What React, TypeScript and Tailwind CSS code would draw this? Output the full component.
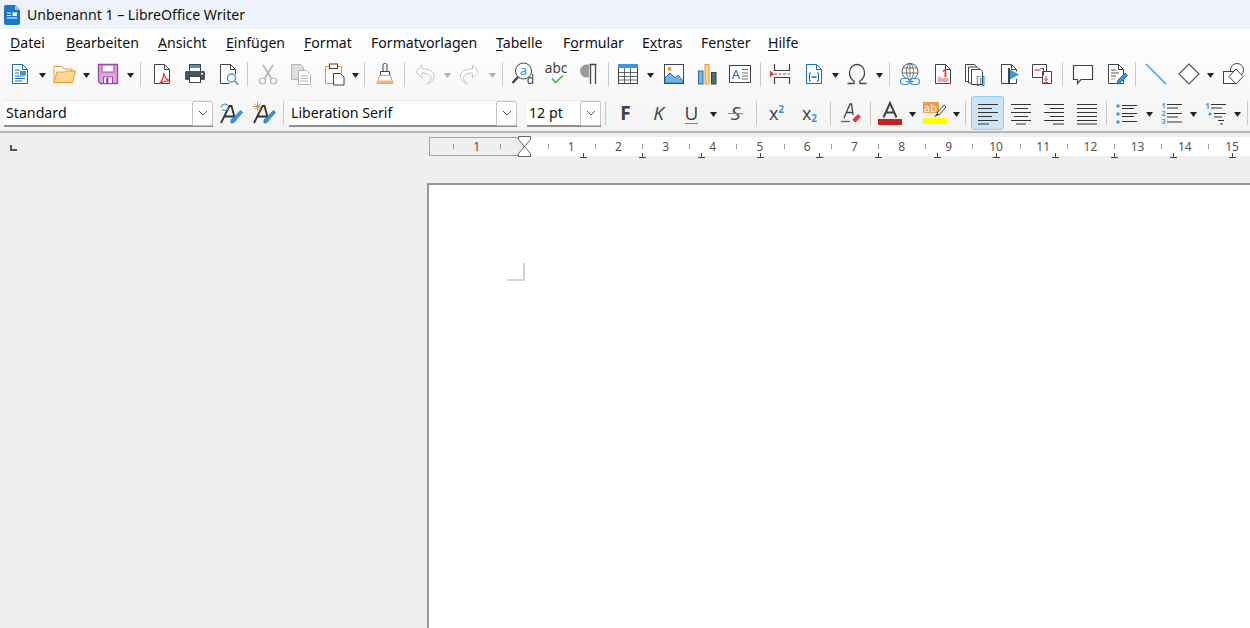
import type { ReactNode } from "react";

const DARK = "#3f4448";
const BLUE = "#1e6fb5";
const SKY = "#3a96dd";
const ORANGE = "#f0943a";
const GRAY = "#b4b4b4";

const Svg = ({ children }: { children: ReactNode }) => (
  <svg className="overflow-visible" width="24" height="24" viewBox="0 0 24 24" fill="none" strokeWidth="1">
    {children}
  </svg>
);

const Doc = ({ color = DARK }: { color?: string }) => (
  <path d="M4.500 2.500h10l5 5v14h-15zM14.500 2.500v5h5" stroke={color} fill="#fff" />
);

const Btn = ({ children, active }: { children: ReactNode; active?: boolean }) => (
  <div
    className={
      active
        ? "w-[33px] h-[34px] shrink-0 flex items-center justify-center rounded-[3px] bg-[#cde4f7] border border-[#90c8f6]"
        : "w-[33px] h-[34px] shrink-0 flex items-center justify-center"
    }
  >
    {children}
  </div>
);

const Arrow = ({ w, faded }: { w: string; faded?: boolean }) => (
  <div className={`${w} shrink-0 flex items-center justify-center pt-[3px]`}>
    <svg width="7" height="5" viewBox="0 0 7 5">
      <path d="M0 0h7L3.500 5z" fill={faded ? "#b0b0b0" : "#222"} />
    </svg>
  </div>
);

const Sep = ({ w }: { w: string }) => (
  <div className={`${w} shrink-0 flex items-center justify-center`}>
    <div className="w-px h-[24px] bg-[#c9c9c9]" />
  </div>
);

const Combo = ({ text, w }: { text: string; w: string }) => (
  <div className={`${w} h-[27px] shrink-0 flex items-center bg-white border-b-2 border-[#8f8f8f] border-t border-t-[#ececec] pl-[2px] text-[14.2px] text-[#111]`}>
    <span className="flex-1 truncate">{text}</span>
    <div className="w-[21px] h-[25px] mb-[-1px] flex items-center justify-center bg-white border border-[#c4c4c4] rounded-[2px]">
      <svg width="10" height="6" viewBox="0 0 10 6" fill="none">
        <path d="M1 1l4 4 4-4" stroke="#555" />
      </svg>
    </div>
  </div>
);

const NewDoc = () => (
  <Svg>
    <Doc color={BLUE} />
    <path d="M7 8h5M7 11h4M7 14h10M7 16.500h10M7 19h7" stroke={BLUE} />
    <rect x="12" y="9" width="6" height="4" fill={SKY} />
  </Svg>
);

const Open = () => (
  <Svg>
    <path d="M1 20.500v-16h8l2 2.500h8v3" stroke={ORANGE} fill="#fff" />
    <path d="M1 20.500l3-10.500h8l1.500-1h9l-3 11.500z" stroke={ORANGE} fill="#fbd88c" />
  </Svg>
);

const Save = () => (
  <Svg>
    <path d="M2.500 2.500h19v19h-17l-2-2z" stroke="#a347a8" fill="#d9a5dc" strokeWidth="1.400" />
    <rect x="6" y="3" width="12" height="7" fill="#fff" stroke="#a347a8" />
    <rect x="7.500" y="15" width="9" height="6.500" fill="#fff" stroke="#a347a8" />
    <rect x="10" y="16" width="2.500" height="5" fill="#a347a8" />
  </Svg>
);

const Pdf = () => (
  <Svg>
    <Doc />
    <path d="M9 22c3-3 5-7 4.500-11 1 4 3 7 7 8-4-.5-8 .5-11.500 3z" stroke="#e23c3c" strokeWidth="1.200" fill="#fff" />
  </Svg>
);

const Print = () => (
  <Svg>
    <rect x="6.500" y="2.500" width="11" height="8" fill="#fff" stroke={DARK} />
    <rect x="7" y="3" width="10" height="3" fill={SKY} />
    <rect x="2" y="9" width="20" height="9" rx="1.500" fill="#4b5358" />
    <rect x="6.500" y="14.500" width="11" height="6" fill="#fff" stroke={DARK} />
    <rect x="18" y="11" width="2" height="1.500" fill="#fff" />
  </Svg>
);

const Preview = () => (
  <Svg>
    <path d="M4.500 21.500v-19h10l5 5v5M4.500 21.500h9M14.500 2.500v5h5" stroke={DARK} fill="#fff" />
    <circle cx="15.500" cy="16" r="4" stroke={SKY} strokeWidth="1.300" fill="#fff" />
    <path d="M18.500 19l3.500 3.500" stroke={SKY} strokeWidth="1.600" />
  </Svg>
);

const Cut = () => (
  <Svg>
    <path d="M7 3l8.500 14M17 3L8.500 17" stroke={GRAY} strokeWidth="1.500" />
    <circle cx="6.500" cy="19" r="3" stroke={GRAY} strokeWidth="1.200" />
    <circle cx="17.500" cy="19" r="3" stroke={GRAY} strokeWidth="1.200" />
  </Svg>
);

const Copy = () => (
  <Svg>
    <path d="M2.500 2.500h9l3 3v12h-12z" stroke={GRAY} fill="#ddd" />
    <path d="M9.500 8.500h8l4 4v10h-12z" stroke={GRAY} fill="#fff" />
    <path d="M11.500 14h8M11.500 16.500h8M11.500 19h8" stroke={GRAY} />
  </Svg>
);

const Paste = () => (
  <Svg>
    <path d="M3.500 4.500h16v17h-16z" stroke={ORANGE} fill="#fff" />
    <rect x="7.500" y="2" width="8" height="4.500" fill="#fff" stroke={DARK} />
    <path d="M11.500 11.500h7l3.500 3.500v8h-10.500z" stroke={DARK} fill="#fff" />
  </Svg>
);

const Clone = () => (
  <Svg>
    <rect x="10" y="1.500" width="4" height="8" rx="1.500" stroke={DARK} fill="#fff" />
    <path d="M7.500 13.500v-4h9v4" stroke={DARK} fill="#fff" />
    <path d="M6.500 13.500h11l2.500 8h-16z" stroke={ORANGE} fill="#fff" />
    <path d="M4.500 18.500h15l.5 3h-16z" fill="#f5b878" />
  </Svg>
);

const Undo = () => (
  <Svg>
    <path d="M3 10l6-7v4c7 0 12 2 12 7 0 4-3 7-7 8 3-2 4-4 4-6 0-3-3-5-9-5v5z" stroke="#c4c4c4" fill="#fff" />
  </Svg>
);

const Redo = () => (
  <Svg>
    <path d="M19.500 10l-6-7v4c-7 0-12 2-12 7 0 4 3 7 7 8-3-2-4-4-4-6 0-3 3-5 9-5v5z" stroke="#c4c4c4" fill="#fff" />
  </Svg>
);

const Find = () => (
  <Svg>
    <circle cx="12.500" cy="9" r="8" stroke={DARK} fill="#fff" />
    <path d="M7 15l-5.500 6" stroke={DARK} strokeWidth="2.400" />
    <text x="12.500" y="13" textAnchor="middle" fontSize="13" fill={SKY} fontFamily="Noto Sans">a</text>
    <text x="19.500" y="21.500" textAnchor="middle" fontSize="12" fill={DARK} fontFamily="Noto Sans">d</text>
  </Svg>
);

const Spell = () => (
  <Svg>
    <text x="12" y="11" textAnchor="middle" fontSize="13.500" fill={DARK} fontFamily="Noto Sans">abc</text>
    <path d="M8 16.500l3.500 4L19 13.500" stroke="#3fb45a" strokeWidth="1.600" />
  </Svg>
);

const Pilcrow = () => (
  <Svg>
    <path d="M12 2.500h-2.500a6.500 6.500 0 0 0 0 13H12z" fill="#9a9a9a" />
    <path d="M12.500 2.500h7M13.500 2.500v19.500M18.500 2.500v19.500" stroke={DARK} strokeWidth="1.300" />
  </Svg>
);

const Table = () => (
  <Svg>
    <rect x="2.500" y="2.500" width="19" height="19" fill="#fff" stroke={DARK} />
    <rect x="2" y="2" width="20" height="4" fill={SKY} />
    <path d="M2.500 10.500h19M2.500 14.500h19M2.500 18h19M8.500 6v15M14.500 6v15" stroke={DARK} strokeWidth=".8" />
  </Svg>
);

const ImageIcon = () => (
  <Svg>
    <rect x="2.500" y="2.500" width="19" height="19" fill="#fff" stroke={DARK} />
    <circle cx="7.500" cy="7" r="2" fill={ORANGE} />
    <path d="M3 21v-5l5-5 5 5 3-3 5 6v2z" fill="#6fb6e6" stroke={BLUE} />
  </Svg>
);

const Chart = () => (
  <Svg>
    <rect x="3.500" y="9" width="4.500" height="13" fill="#6fb6e6" stroke={BLUE} />
    <rect x="10" y="2.500" width="4" height="19.500" fill="#fbd88c" stroke={ORANGE} />
    <rect x="16.500" y="10.500" width="4.500" height="11.500" fill="#5f666b" stroke={DARK} />
  </Svg>
);

const TextBox = () => (
  <Svg>
    <rect x="1.500" y="3.500" width="21" height="17" fill="#fff" stroke={DARK} />
    <text x="8" y="16.500" textAnchor="middle" fontSize="13" fill={BLUE} fontFamily="Noto Sans">A</text>
    <path d="M14 7.500h6M14 11h6M14 14h6M14 17h6" stroke={DARK} strokeWidth=".8" />
  </Svg>
);

const PageBreak = () => (
  <Svg>
    <path d="M5.500 2v6.500h15V2M5.500 22v-6.500h15V22" stroke={DARK} strokeWidth="1.200" />
    <path d="M5 12h16" stroke="#e23c3c" strokeDasharray="3 1.500" />
    <path d="M1 8.500l4 3.500-4 3.500z" fill="#e23c3c" />
  </Svg>
);

const Field = () => (
  <Svg>
    <Doc color={BLUE} />
    <path d="M9 11H7.500v8H9M15 11h1.500v8H15" stroke={BLUE} />
    <path d="M9.500 15h5" stroke={BLUE} strokeWidth="1.500" />
  </Svg>
);

const Omega = () => (
  <Svg>
    <path d="M2.500 21.500h6.500v-2.500c-3-2-4.500-4.500-4.500-8 0-5 3-8.500 7.500-8.500s7.500 3.500 7.500 8.500c0 3.500-1.500 6-4.500 8v2.500h6.500" stroke={DARK} strokeWidth="1.300" />
  </Svg>
);

const Hyperlink = () => (
  <Svg>
    <circle cx="12" cy="9.500" r="8" stroke="#555" fill="#fff" />
    <ellipse cx="12" cy="9.500" rx="3.500" ry="8" stroke="#555" strokeWidth=".8" />
    <path d="M12 1.500v14M5 6h14M5 11h14" stroke="#555" strokeWidth=".8" />
    <rect x="2.500" y="16.500" width="9" height="6" rx="3" fill="#fff" stroke={SKY} strokeWidth="1.200" />
    <rect x="12.500" y="16.500" width="9" height="6" rx="3" fill="#fff" stroke={SKY} strokeWidth="1.200" />
    <path d="M8 19.500h8" stroke={SKY} strokeWidth="1.200" />
  </Svg>
);

const Footnote = () => (
  <Svg>
    <Doc />
    <text x="14" y="15" textAnchor="middle" fontSize="11" fontWeight="700" fill="#e23c3c" fontFamily="Noto Sans">1</text>
    <path d="M6.500 17h11M6.500 19h11" stroke="#e23c3c" strokeWidth=".9" />
    <path d="M6.500 15h4" stroke={GRAY} />
  </Svg>
);

const Endnote = () => (
  <Svg>
    <path d="M1.500 2.500h9l2 2v15h-11z" stroke={DARK} fill="#fff" />
    <path d="M4.500 5h9l2 2v14h-11z" stroke={DARK} fill="#fff" />
    <path d="M7.500 7.500h9l2 2v13h-11z" stroke={DARK} fill="#fff" />
    <text x="16.500" y="22" textAnchor="middle" fontSize="10" fill={BLUE} fontFamily="Noto Sans">[i]</text>
  </Svg>
);

const Bookmark = () => (
  <Svg>
    <path d="M4.500 21.500v-19h10l5 5v2M14.500 2.500v5h5M19.500 17v4.500h-15" stroke={DARK} />
    <rect x="11" y="6" width="2" height="16" fill={DARK} />
    <path d="M13 7.500l9 5-9 5z" fill={SKY} />
  </Svg>
);

const CrossRef = () => (
  <Svg>
    <path d="M2.500 2.500h14v13h-14z" stroke={DARK} fill="#fff" />
    <path d="M4.500 8h6" stroke="#e23c3c" strokeWidth="1.200" />
    <path d="M12.500 9.500h9v12h-9z" stroke={DARK} fill="#fff" />
    <path d="M10.500 6.500h3v7" stroke={DARK} />
    <path d="M16 14v4M14 16.500l2 2.500 2-2.500M14 20.500h4" stroke="#e23c3c" />
  </Svg>
);

const Comment = () => (
  <Svg>
    <path d="M2.500 3.500h19v14H10l-3.500 4v-4h-4z" stroke={DARK} strokeWidth="1.200" fill="#fff" />
  </Svg>
);

const Track = () => (
  <Svg>
    <Doc />
    <path d="M7 8h5M7 11h8M7 14h5" stroke={DARK} strokeWidth=".9" />
    <path d="M7 17h4" stroke={ORANGE} />
    <path d="M13 22l1-4 7-7 2.500 2.500-7 7z" fill={SKY} stroke={BLUE} />
  </Svg>
);

const Line = () => (
  <Svg>
    <path d="M2 2l20 20" stroke={SKY} strokeWidth="1.300" />
  </Svg>
);

const Diamond = () => (
  <Svg>
    <path d="M12 2l10 10-10 10L2 12z" stroke="#555" strokeWidth="1.200" fill="#fff" />
  </Svg>
);

const Shapes = () => (
  <Svg>
    <circle cx="16" cy="8" r="6.500" stroke={DARK} fill="#fff" />
    <rect x="2.500" y="9.500" width="12" height="12" stroke={DARK} fill="#fff" />
    <path d="M15 7l7 7.500L15 22l-7-7.500z" stroke={DARK} fill="#fff" />
  </Svg>
);

const StyleBase = () => (
  <>
    <path d="M2 22L10.500 5h2l3.500 13M5.500 15.500h9" stroke="#2f3336" strokeWidth="1.800" />
    <path d="M12 22c-.5-3.500 1-5 3.500-6l6-6.500 2 2-6 6.500c-1 2.500-2.500 4-5.500 4z" fill="#3a96dd" stroke={BLUE} strokeWidth=".8" />
  </>
);

const StyleUpdate = () => (
  <Svg>
    <StyleBase />
    <path d="M2 6.500a4 4 0 0 1 7-2M9.500 6.500a4 4 0 0 1-6.500 2" stroke={SKY} strokeWidth="1.200" />
  </Svg>
);

const StyleNew = () => (
  <Svg>
    <StyleBase />
    <path d="M5.500 1v9M1 5.500h9M2.500 2.500l6 6M8.500 2.500l-6 6" stroke={ORANGE} strokeWidth="1" />
  </Svg>
);

const ClearFormat = () => (
  <Svg>
    <path d="M5 17L11 3h1.500L14 14M7.500 11.500H14" stroke={DARK} strokeWidth="1.300" />
    <path d="M2 20.500h9" stroke={BLUE} strokeWidth="1.300" />
    <path d="M13 19l6-6 3 3-6 6z" fill="#e23c3c" />
    <path d="M13 19l3 3" stroke="#fff" />
  </Svg>
);

const FontColor = () => (
  <Svg>
    <path d="M5.500 16.500L12 2l6.500 14.500M8 11.500h8" stroke={DARK} strokeWidth="2" />
    <rect x="0" y="18" width="24" height="6" fill="#c9211e" />
  </Svg>
);

const Highlight = () => (
  <Svg>
    <rect x="0" y="1" width="16" height="11" fill="#f79b43" />
    <text x="7.500" y="10.500" textAnchor="middle" fontSize="11" fill="#fff" fontFamily="Noto Sans">ab</text>
    <path d="M14 12l7-8 2 2-7 8z" stroke={DARK} fill="#fff" />
    <path d="M11 16l3-4 2 2z" fill={DARK} />
    <rect x="0" y="17" width="24" height="6" fill="#ffff00" />
  </Svg>
);

const Lines = ({ d }: { d: string }) => (
  <Svg>
    <path d={d} stroke="#333" strokeWidth="1.100" />
  </Svg>
);

const Bullets = () => (
  <Svg>
    <path d="M7 4.500h15M7 7.500h12M7 12.500h15M7 15.500h12M7 20.500h15" stroke="#333" />
    <circle cx="3" cy="5" r="1.700" fill={SKY} />
    <circle cx="3" cy="13" r="1.700" fill={SKY} />
    <circle cx="3" cy="21" r="1.700" fill={SKY} />
  </Svg>
);

const Numbered = () => (
  <Svg>
    <path d="M7 3.500h15M7 7h11M7 12.500h15M7 16h11M7 21h15" stroke="#333" />
    <text x="3.500" y="7" textAnchor="middle" fontSize="7" fontWeight="700" fill={SKY} fontFamily="Noto Sans">1</text>
    <text x="3.500" y="15" textAnchor="middle" fontSize="7" fontWeight="700" fill={SKY} fontFamily="Noto Sans">2</text>
    <text x="3.500" y="23" textAnchor="middle" fontSize="7" fontWeight="700" fill={SKY} fontFamily="Noto Sans">3</text>
  </Svg>
);

const Outline = () => (
  <Svg>
    <path d="M7 3.500h15M7 7h11M10 12.500h12M10 16h8M14 19.500h6M16 23h3" stroke="#333" />
    <text x="3.500" y="8" textAnchor="middle" fontSize="8" fontWeight="700" fill={SKY} fontFamily="Noto Sans">1</text>
    <circle cx="6" cy="13" r="1.500" fill={SKY} />
  </Svg>
);

const menu = [
  { w: "w-[56px]", a: "", u: "D", b: "atei" },
  { w: "w-[92px]", a: "", u: "B", b: "earbeiten" },
  { w: "w-[68px]", a: "", u: "A", b: "nsicht" },
  { w: "w-[78px]", a: "", u: "E", b: "infügen" },
  { w: "w-[67px]", a: "", u: "F", b: "ormat" },
  { w: "w-[125px]", a: "Format", u: "v", b: "orlagen" },
  { w: "w-[67px]", a: "", u: "T", b: "abelle" },
  { w: "w-[79px]", a: "F", u: "o", b: "rmular" },
  { w: "w-[59px]", a: "E", u: "x", b: "tras" },
  { w: "w-[67px]", a: "Fen", u: "s", b: "ter" },
  { w: "w-[60px]", a: "", u: "H", b: "ilfe" },
];

const rulerNumbers = [-1, 1, 2, 3, 4, 5, 6, 7, 8, 9, 10, 11, 12, 13, 14, 15];
const rulerHalves = Array.from({ length: 32 }, (_, i) => i - 2);
const tabStops = Array.from({ length: 12 }, (_, i) => i + 1);

const Ruler = () => (
  <div className="relative ml-[429px] mt-[4px] h-[19px] bg-white">
    <div className="absolute left-0 top-0 w-[95px] h-[19px] bg-[#efefef] border border-[#a3a3a3]" />
    {rulerHalves.map((n) => (
      <div
        key={n}
        className="absolute top-[7px] w-px h-[5px] bg-[#9a9a9a]"
        style={{ left: 95 + (n + 0.5) * 47.2 }}
      />
    ))}
    {rulerNumbers.map((n) => (
      <span
        key={n}
        className="absolute top-0 w-[20px] text-center text-[12px] leading-[19px] text-[#555]"
        style={{ left: 95 + n * 47.2 - 10 }}
      >
        {Math.abs(n)}
      </span>
    ))}
    {tabStops.map((n) => (
      <svg
        key={n}
        className="absolute top-[16px]"
        style={{ left: 95 + n * 59 - 3 }}
        width="7"
        height="5"
        viewBox="0 0 7 5"
      >
        <path d="M3.500 0v4M0 4.500h7" stroke="#444" />
      </svg>
    ))}
    <svg className="absolute left-[89px] top-[-1px]" width="13" height="21" viewBox="0 0 13 21" fill="none">
      <path d="M.5.500h12v3l-6 7-6-7zM.5 20.500h12v-3l-6-7-6 7z" fill="#fff" stroke="#666" />
    </svg>
  </div>
);

export default function App() {
  return (
    <div className="h-screen w-full overflow-hidden flex flex-col bg-[#efefef] font-['Noto_Sans',sans-serif] text-[#111]">
      <div className="h-[29px] shrink-0 flex items-center gap-[7px] pl-[4px] bg-[#eef3fb] text-[14.1px]">
        <svg width="16" height="20" viewBox="0 0 16 20">
          <path d="M2 0h9l5 5v13a2 2 0 0 1-2 2H2a2 2 0 0 1-2-2V2a2 2 0 0 1 2-2z" fill="#1a78c8" />
          <path d="M11 0l5 5h-5z" fill="#8cc4ee" />
          <path d="M3 8h4M3 10.500h4M3 13h10" stroke="#fff" />
          <rect x="8.500" y="7.500" width="4.500" height="3.500" fill="#fff" />
        </svg>
        <span>Unbenannt 1 – LibreOffice Writer</span>
      </div>

      <div className="shrink-0 h-[104px] bg-linear-to-b from-white to-[#f4f4f4] border-b-2 border-[#b4b4b4]">
        <div className="h-[28px] flex items-center text-[14.1px]">
          {menu.map((m) => (
            <div key={m.u + m.b} className={`${m.w} pl-[10px] shrink-0`}>
              {m.a}
              <span className="underline underline-offset-2 decoration-1">{m.u}</span>
              {m.b}
            </div>
          ))}
        </div>

        <div className="h-[34px] flex items-center pl-[3px] overflow-hidden">
          <Btn><NewDoc /></Btn>
          <Arrow w="w-[12px]" />
          <Btn><Open /></Btn>
          <Arrow w="w-[11px]" />
          <div className="ml-[-1px]"><Btn><Save /></Btn></div>
          <Arrow w="w-[12px]" />
          <Sep w="w-[9px]" />
          <Btn><Pdf /></Btn>
          <Btn><Print /></Btn>
          <Btn><Preview /></Btn>
          <Sep w="w-[7px]" />
          <Btn><Cut /></Btn>
          <Btn><Copy /></Btn>
          <Btn><Paste /></Btn>
          <Arrow w="w-[11px]" />
          <Sep w="w-[7px]" />
          <Btn><Clone /></Btn>
          <Sep w="w-[7px]" />
          <Btn><Undo /></Btn>
          <Arrow w="w-[13px]" faded />
          <Btn><Redo /></Btn>
          <Arrow w="w-[11px]" faded />
          <Sep w="w-[8px]" />
          <Btn><Find /></Btn>
          <Btn><Spell /></Btn>
          <Btn><Pilcrow /></Btn>
          <Sep w="w-[6px]" />
          <Btn><Table /></Btn>
          <Arrow w="w-[13px]" />
          <Btn><ImageIcon /></Btn>
          <Btn><Chart /></Btn>
          <Btn><TextBox /></Btn>
          <Sep w="w-[8px]" />
          <Btn><PageBreak /></Btn>
          <Btn><Field /></Btn>
          <Arrow w="w-[10px]" />
          <Btn><Omega /></Btn>
          <Arrow w="w-[12px]" />
          <Sep w="w-[8px]" />
          <Btn><Hyperlink /></Btn>
          <Btn><Footnote /></Btn>
          <Btn><Endnote /></Btn>
          <Btn><Bookmark /></Btn>
          <Btn><CrossRef /></Btn>
          <Sep w="w-[8px]" />
          <Btn><Comment /></Btn>
          <Btn><Track /></Btn>
          <Sep w="w-[7px]" />
          <Btn><Line /></Btn>
          <Btn><Diamond /></Btn>
          <Arrow w="w-[11px]" />
          <Btn><Shapes /></Btn>
        </div>

        <div className="h-[40px] pt-[4px] flex items-center pl-[4px] overflow-hidden">
          <Combo text="Standard" w="w-[209px]" />
          <div className="w-[1px] shrink-0" />
          <Btn><StyleUpdate /></Btn>
          <Btn><StyleNew /></Btn>
          <Sep w="w-[6px]" />
          <div className="w-[3px] shrink-0" />
          <Combo text="Liberation Serif" w="w-[228px]" />
          <div className="w-[10px] shrink-0" />
          <Combo text="12 pt" w="w-[74px]" />
          <Sep w="w-[8px]" />
          <Btn><span className="text-[19px] font-bold text-[#3f4448] font-['Open_Sans',sans-serif]">F</span></Btn>
          <Btn><span className="text-[19px] italic text-[#3f4448] font-['Open_Sans',sans-serif]">K</span></Btn>
          <Btn><span className="text-[19px] text-[#3f4448] font-['Open_Sans',sans-serif] border-b border-[#3a96dd] leading-[20px]">U</span></Btn>
          <Arrow w="w-[11px]" />
          <Btn>
            <span className="relative text-[19px] italic text-[#3f4448] font-['Open_Sans',sans-serif]">
              S
              <span className="absolute left-[-3px] right-[-3px] top-[14px] h-px bg-[#3a96dd]" />
            </span>
          </Btn>
          <Sep w="w-[8px]" />
          <Btn>
            <span className="text-[18px] font-medium text-[#3f4448] font-['Open_Sans',sans-serif]">x<sup className="text-[10px] text-[#3a96dd] font-bold top-[-7px]">2</sup></span>
          </Btn>
          <Btn>
            <span className="text-[18px] font-medium text-[#3f4448] font-['Open_Sans',sans-serif]">x<sub className="text-[10px] text-[#3a96dd] font-bold">2</sub></span>
          </Btn>
          <Sep w="w-[8px]" />
          <Btn><ClearFormat /></Btn>
          <Sep w="w-[6px]" />
          <Btn><FontColor /></Btn>
          <Arrow w="w-[12px]" />
          <Btn><Highlight /></Btn>
          <Arrow w="w-[10px]" />
          <Sep w="w-[9px]" />
          <div className="w-[1px] shrink-0" />
          <Btn active><Lines d="M2 3.500h20M2 7.500h14M2 11.500h20M2 15.500h14M2 19.500h20M2 23h11" /></Btn>
          <Btn><Lines d="M2 3.500h20M5 7.500h14M2 11.500h20M5 15.500h14M2 19.500h20M7 23h10" /></Btn>
          <Btn><Lines d="M2 3.500h20M8 7.500h14M2 11.500h20M8 15.500h14M2 19.500h20M11 23h11" /></Btn>
          <Btn><Lines d="M2 3.500h20M2 7.500h20M2 11.500h20M2 15.500h20M2 19.500h20M2 23h20" /></Btn>
          <Sep w="w-[7px]" />
          <Btn><Bullets /></Btn>
          <Arrow w="w-[12px]" />
          <Btn><Numbered /></Btn>
          <Arrow w="w-[11px]" />
          <Btn><Outline /></Btn>
          <Arrow w="w-[11px]" />
          <Sep w="w-[8px]" />
        </div>
      </div>

      <div className="relative h-[23px] shrink-0">
        <svg className="absolute left-[10px] top-[12px]" width="7" height="6" viewBox="0 0 7 6" fill="none">
          <path d="M1 0v5h6" stroke="#555" strokeWidth="2" />
        </svg>
        <Ruler />
      </div>

      <div className="flex-1 pl-[427px] pt-[27px] min-h-0">
        <div className="h-full bg-white border-l-2 border-t-2 border-[#989898]">
          <div className="ml-[78px] pt-[78px]">
            <div className="w-[18px] h-[18px] border-r-2 border-b-2 border-[#d4d4d4]" />
          </div>
        </div>
      </div>
    </div>
  );
}
